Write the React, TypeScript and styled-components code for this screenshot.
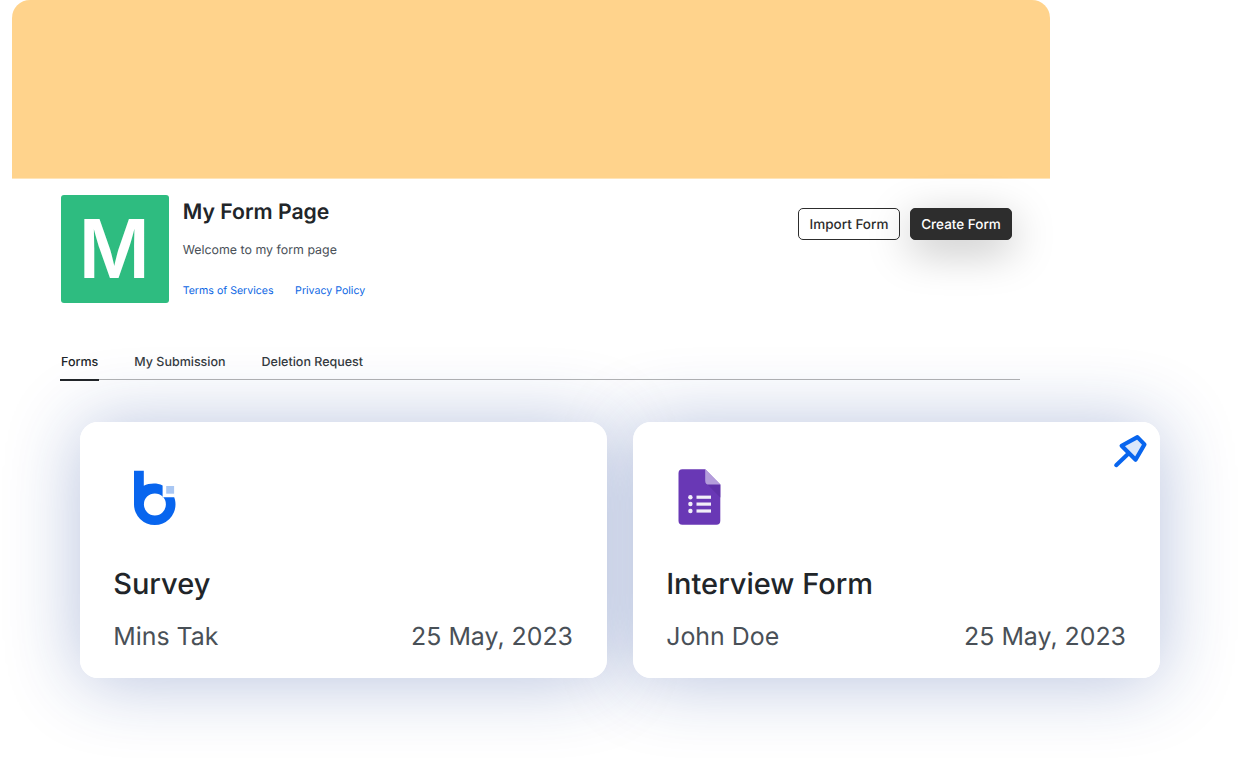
import React from "react";
import styled, { createGlobalStyle } from "styled-components";

const GlobalStyle = createGlobalStyle`
  *, *::before { box-sizing: border-box; }
  body { margin: 0; background: #fff; font-family: Inter, "Liberation Sans", sans-serif; text-rendering: geometricPrecision; }
  h1, h2, p { margin: 0; font-weight: inherit; }
`;

const Page = styled.main`
  width: 1240px;
  height: 758px;
  overflow: hidden;
  background: #fff;
`;

const Banner = styled.div`
  width: 1038px;
  height: 179px;
  margin-left: 12px;
  border-radius: 18px 18px 0 0;
  background: linear-gradient(#ffd38c 178px, #ffe5ba 178px);
`;

const Header = styled.header`
  display: flex;
  width: 1012px;
  height: 125px;
  padding: 16px 0 0 61px;
`;

const Avatar = styled.div`
  display: flex;
  align-items: center;
  justify-content: center;
  width: 107.5px;
  height: 107.5px;
  padding-top: 2px;
  border-radius: 3px;
  background: #2ebc80;
  color: #fff;
  font-size: 81px;
  font-weight: 600;
  line-height: 1;
`;

const Initial = styled.span`
  display: block;
  transform: scaleX(0.95);
`;

const Intro = styled.div`
  display: flex;
  flex-direction: column;
  flex: 1;
  margin-left: 14.2px;
`;

const PageTitle = styled.h1`
  margin-top: 2.4px;
  color: #212529;
  font-size: 21.2px;
  font-weight: 600;
  line-height: 30px;
`;

const Welcome = styled.p`
  margin-top: 12.3px;
  color: #495057;
  font-size: 12.4px;
  line-height: 20px;
`;

const Links = styled.nav`
  display: flex;
  gap: 21.5px;
  margin-top: 23.3px;
`;

const TextLink = styled.a`
  color: #0b66e4;
  font-size: 10.6px;
  line-height: 16px;
`;

const Actions = styled.div`
  display: flex;
  gap: 10px;
  margin-top: 13px;
`;

const Button = styled.button<{ $primary?: boolean }>`
  width: 102px;
  height: 32px;
  padding: 2px 0 0;
  border: 1px solid #2d2d2d;
  border-radius: 5px;
  background: ${(p) => (p.$primary ? "#2d2d2d" : "#fff")};
  color: ${(p) => (p.$primary ? "#fff" : "#2d2d2d")};
  box-shadow: ${(p) => (p.$primary ? "0 11px 43px rgba(0, 0, 0, 0.25)" : "none")};
  font-family: inherit;
  font-size: 13.5px;
  font-weight: 500;
  line-height: 28px;
  text-rendering: inherit;
  white-space: nowrap;
`;

const Tabs = styled.div`
  position: relative;
  z-index: 1;
  display: flex;
  gap: 34px;
  width: 960px;
  height: 29px;
  margin: 47px 0 0 60px;
  border-bottom: 1px solid rgba(33, 37, 41, 0.35);
`;

const Tab = styled.div<{ $active?: boolean }>`
  height: 30px;
  padding: 0 1px;
  border-bottom: 2px solid ${(p) => (p.$active ? "#212529" : "transparent")};
  color: ${(p) => (p.$active ? "#212529" : "#343a40")};
  font-size: 12.5px;
  font-weight: 500;
  line-height: 24px;
  white-space: nowrap;
`;

const Cards = styled.section`
  display: flex;
  gap: 26.5px;
  margin: 42px 0 0 80px;
  isolation: isolate;
`;

const Card = styled.article`
  position: relative;
  width: 526.5px;
  height: 256px;
  padding: 47px 33.5px 0 33.2px;
  border-radius: 18px;
  background: #fff;

  &::before {
    content: "";
    position: absolute;
    inset: 0;
    z-index: -1;
    border-radius: 18px;
    box-shadow: 0 3px 74px rgba(22, 58, 150, 0.31);
  }
`;

const LogoSlot = styled.div<{ $indent: number }>`
  height: 57px;
  padding-left: ${(p) => p.$indent}px;
  svg { display: block; }
`;

const CardTitle = styled.h2`
  margin-top: 38px;
  color: #212529;
  font-size: 29px;
  font-weight: 500;
  line-height: 40px;
`;

const Meta = styled.div`
  display: flex;
  justify-content: space-between;
  margin-top: 15px;
  color: #495057;
  font-size: 24.9px;
  line-height: 36px;
`;

const PinSlot = styled.div`
  position: absolute;
  top: 10px;
  right: 10px;
  svg { display: block; }
`;

const SurveyLogo = () => (
  <svg width="44" height="57" viewBox="0 0 44 57">
    <path
      fillRule="evenodd"
      fill="#0865ee"
      d="M1 1.7H10.8V16.8C15.6 14.4 23.5 13.6 29.6 16.4V28.2H41.2C42.1 30.2 42.5 33 42.5 35.4A20.75 20.6 0 0 1 1 35.4ZM21.9 24.4a11 11 0 1 0 0 22a11 11 0 1 0 0-22Z"
    />
    <rect x="33.2" y="17" width="7.9" height="7.7" fill="#a9c7f3" />
  </svg>
);

const FormLogo = () => (
  <svg width="44" height="57" viewBox="0 0 44 57">
    <path fill="#6938b5" d="M4.4 .3H27.2L42.3 15.6V51.8a3.9 3.9 0 0 1-3.9 3.9H4.4A3.9 3.9 0 0 1 .5 51.8V4.2A3.9 3.9 0 0 1 4.4 .3Z" />
    <path fill="#5f31a8" d="M28.5 14.6L42.3 28.4V15.6Z" />
    <path fill="#b49ddb" d="M27.2 .3L42.3 15.6H31.1a3.9 3.9 0 0 1-3.9-3.9Z" />
    <g fill="#f2eff8">
      <circle cx="12.4" cy="28.2" r="2.2" />
      <circle cx="12.4" cy="35" r="2.2" />
      <circle cx="12.4" cy="42" r="2.2" />
      <rect x="18.5" y="26.6" width="14.5" height="3.2" />
      <rect x="18.5" y="33.5" width="14.5" height="3.2" />
      <rect x="18.5" y="40.4" width="14.5" height="3.2" />
    </g>
  </svg>
);

const PinIcon = () => (
  <svg width="38" height="38" viewBox="0 0 38 38" stroke="#0865ee" strokeWidth="4.1" strokeLinecap="round" strokeLinejoin="round">
    <path fill="#dae7fb" d="M9.6 13.7L25.4 5.1L32.5 12.4L23.6 27.8Z" />
    <path fill="none" d="M16.5 21.5L4.2 33.2" />
  </svg>
);

interface FormCardProps {
  title: string;
  author: string;
  logo: React.ReactNode;
  indent: number;
  pinned?: boolean;
}

const FormCard = ({ title, author, logo, indent, pinned }: FormCardProps) => (
  <Card>
    <LogoSlot $indent={indent}>{logo}</LogoSlot>
    <CardTitle>{title}</CardTitle>
    <Meta>
      <span>{author}</span>
      <span>25 May, 2023</span>
    </Meta>
    {pinned && <PinSlot><PinIcon /></PinSlot>}
  </Card>
);

export default function App() {
  return (
    <Page>
      <GlobalStyle />
      <Banner />
      <Header>
        <Avatar><Initial>M</Initial></Avatar>
        <Intro>
          <PageTitle>My Form Page</PageTitle>
          <Welcome>Welcome to my form page</Welcome>
          <Links>
            <TextLink>Terms of Services</TextLink>
            <TextLink>Privacy Policy</TextLink>
          </Links>
        </Intro>
        <Actions>
          <Button>Import Form</Button>
          <Button $primary>Create Form</Button>
        </Actions>
      </Header>
      <Tabs>
        <Tab $active>Forms</Tab>
        <Tab>My Submission</Tab>
        <Tab>Deletion Request</Tab>
      </Tabs>
      <Cards>
        <FormCard title="Survey" author="Mins Tak" logo={<SurveyLogo />} indent={19.8} />
        <FormCard title="Interview Form" author="John Doe" logo={<FormLogo />} indent={12} pinned />
      </Cards>
    </Page>
  );
}
